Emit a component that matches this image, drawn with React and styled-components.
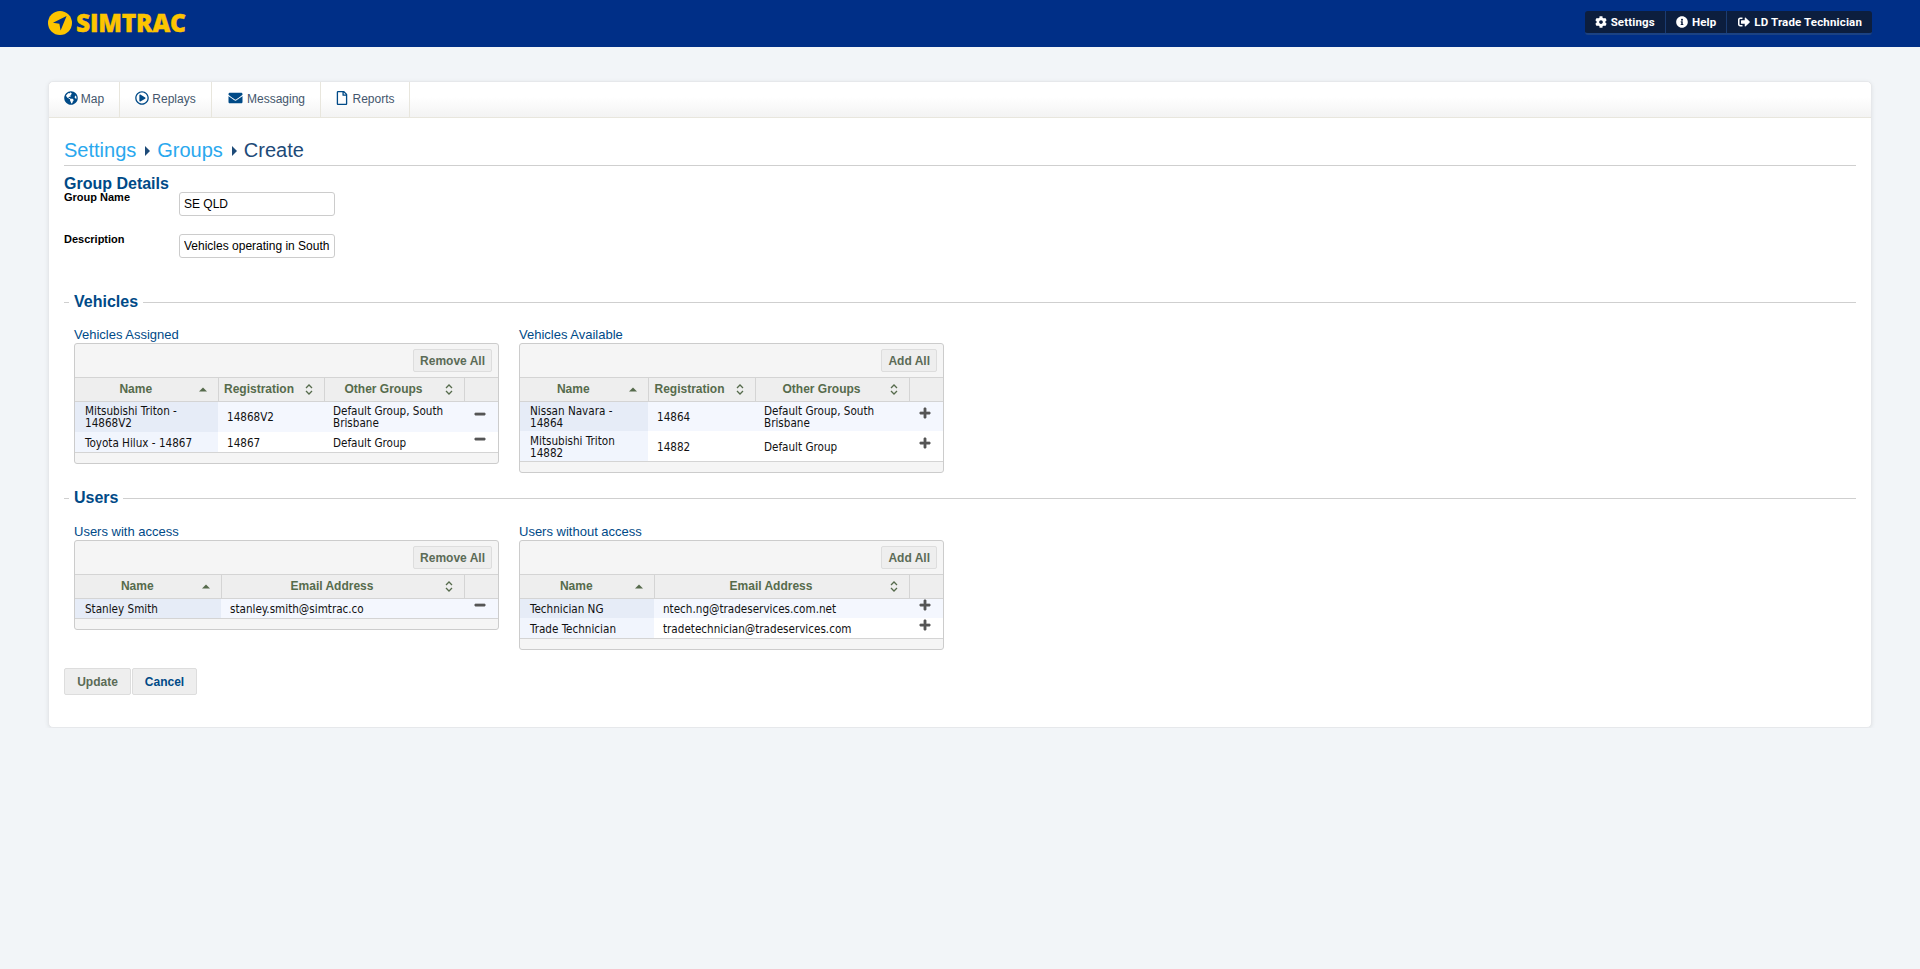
import React from "react";
import styled, { createGlobalStyle } from "styled-components";
import { FaGlobeAmericas, FaRegPlayCircle, FaEnvelope, FaRegFile, FaCog, FaInfoCircle, FaSignOutAlt, FaPlus, FaMinus } from "react-icons/fa";

const Global = createGlobalStyle`
  html, body { margin: 0; padding: 0; background: #f2f5f8; min-height: 100%; }
  body { font-family: "Liberation Sans", Arial, sans-serif; font-size: 12px; color: #000; }
  * { box-sizing: border-box; }
`;

const Header = styled.header`
  height: 47px;
  background: #002f87;
  padding: 0 48px;
  display: flex;
  align-items: center;
  justify-content: space-between;
`;
const Logo = styled.div`
  display: flex;
  align-items: center;
  gap: 4px;
  margin-top: -1px;
`;
const LogoText = styled.span`
  font-family: "Open Sans", sans-serif;
  font-weight: 800;
  font-size: 24.5px;
  letter-spacing: -0.2px;
  line-height: 24px;
  color: #fdc400;
  -webkit-text-stroke: 0.4px #fdc400;
`;
const UserNav = styled.nav`
  display: flex;
  height: 24px;
  margin-top: -1px;
  background: #0c1e3e;
  border-bottom: 2px solid #1b4283;
  border-radius: 3px;
`;
const NavItem = styled.a`
  display: flex;
  align-items: center;
  gap: 4px;
  padding: 0 ${p => p.$pr}px 0 ${p => p.$pl}px;
  color: #fff;
  font: bold 11.5px "Roboto", "Liberation Sans", sans-serif;
  letter-spacing: 0.15px;
  & + & { border-left: 1px solid #1b3c72; }
  svg { width: 12px; height: 12px; }
`;

const Main = styled.main`
  padding: 34px 48px 0 48px;
`;
const Card = styled.div`
  height: 647px;
  background: #fff;
  border: 1px solid #e6e8eb;
  border-radius: 5px;
  box-shadow: 0 1px 4px rgba(0, 0, 0, 0.08);
`;
const TabBar = styled.div`
  display: flex;
  height: 36px;
  border-bottom: 1px solid #e8e6dd;
  background: linear-gradient(#fff 0, #fff 15px, #f3f3f3 100%);
  border-radius: 5px 5px 0 0;
`;
const Tab = styled.a`
  width: ${p => p.$w}px;
  display: flex;
  align-items: center;
  justify-content: center;
  gap: 3px;
  padding-bottom: 2px;
  border-right: 1px solid #e8e6dd;
  color: #44566c;
  font-size: 12px;
  svg { width: ${p => p.$icon || 14}px; height: 14px; color: #004a87; margin-top: -2px; }
`;
const Body = styled.div`
  padding: 20px 15px 0 15px;
`;
const Crumbs = styled.div`
  display: flex;
  align-items: center;
  height: 28px;
  border-bottom: 1px solid #cfcfcf;
  font-size: 20px;
  line-height: 24px;
  padding-bottom: 3px;
`;
const CrumbLink = styled.a`
  color: #2aa8ee;
`;
const CrumbCurrent = styled.span`
  color: #1d4a78;
`;
const CrumbArrow = styled.span`
  width: 0;
  height: 0;
  margin: 2px 7px 0 9px;
  border-left: 5px solid #1d4a78;
  border-top: 5px solid transparent;
  border-bottom: 5px solid transparent;
`;
const DetailsTitle = styled.h3`
  margin: 10px 0 0 0;
  font-size: 16px;
  line-height: 16px;
  font-weight: bold;
  color: #004a87;
`;
const FormRow = styled.div`
  display: flex;
  align-items: flex-start;
  height: ${p => p.$h}px;
`;
const FormLabel = styled.label`
  width: 115px;
  font-size: 11px;
  line-height: 11px;
  font-weight: bold;
`;
const TextInput = styled.input`
  width: 156px;
  height: 24px;
  padding: 0 4px;
  border: 1px solid #ccc;
  border-radius: 3px;
  font: 12px "Liberation Sans", sans-serif;
  color: #000;
  background: #fff;
`;
const Section = styled.fieldset`
  margin: ${p => p.$mt}px 0 0 0;
  padding: 0 0 0 10px;
  border: 0;
  border-top: 1px solid #cfcfcf;
`;
const Legend = styled.legend`
  margin-left: -5px;
  padding: 0 5px;
  font-size: 16px;
  line-height: 18px;
  font-weight: bold;
  color: #004a87;
`;
const Panels = styled.div`
  display: flex;
  align-items: flex-start;
  gap: 20px;
  margin-top: ${p => p.$mt}px;
`;
const Panel = styled.div`
  width: 425px;
`;
const PanelTitle = styled.div`
  font-size: 13px;
  line-height: 15px;
  margin-bottom: 1px;
  color: #004a87;
`;
const GridBox = styled.div`
  border: 1px solid #ccc;
  border-radius: 3px;
  background: #f5f5f5;
`;
const Toolbar = styled.div`
  height: 34px;
  padding: 5px 6px 0 0;
  display: flex;
  justify-content: flex-end;
  border-bottom: 1px solid #d4d4d4;
`;
const SmallButton = styled.button`
  height: 23px;
  padding: 0 6px;
  border: 1px solid #ddd;
  border-radius: 2px;
  background: #eee;
  color: #5b6b56;
  font: bold 12px "Liberation Sans", sans-serif;
`;
const Grid = styled.table`
  width: 423px;
  table-layout: fixed;
  border-collapse: collapse;
  background: #fff;
  font-family: "DejaVu Sans", sans-serif;
  font-stretch: condensed;
`;
const Column = styled.col`
  width: ${p => p.$w}px;
`;
const HeadCell = styled.th`
  position: relative;
  height: 23px;
  padding: 0 ${p => p.$pr || 21}px 0 0;
  background: #eee;
  border-right: 1px solid #d4d4d4;
  border-bottom: 1px solid #d4d4d4;
  color: #566b4c;
  font: bold 12px "Liberation Sans", sans-serif;
  text-align: center;
  &:last-child { border-right: 0; padding: 0; }
`;
const SortMark = styled.svg`
  position: absolute;
  right: 11px;
  top: 6px;
  width: 8px;
  height: 11px;
`;
const Cell = styled.td`
  height: ${p => p.$h}px;
  padding: 1px 2px 0 ${p => p.$sorted ? 10 : 9}px;
  font-size: 11.6px;
  line-height: 12px;
  color: #111;
  background: ${p => p.$sorted ? (p.$odd ? "#e6ecf7" : "#f1f5fd") : (p.$odd ? "#f4f7fe" : "#fff")};
`;
const ActionCell = styled(Cell)`
  padding: 0 2px 6px 0;
  text-align: center;
  color: #555;
  svg { width: 12px; height: 12px; display: block; margin: 0 auto; stroke: currentColor; stroke-width: 24; }
`;
const GridFoot = styled.div`
  height: 11px;
  border-top: 1px solid #d4d4d4;
`;
const Actions = styled.div`
  display: flex;
  gap: 1px;
  margin-top: 18px;
`;
const ActionButton = styled.button`
  height: 27px;
  width: ${p => p.$w}px;
  border: 1px solid #ddd;
  border-radius: 2px;
  background: #eee;
  color: ${p => p.$blue ? "#004a87" : "#5b6b56"};
  font: bold 12px "Liberation Sans", sans-serif;
`;

function LocationLogo() {
  return (
    <svg width="24" height="24" viewBox="0 0 24 24">
      <circle cx="12" cy="12" r="12" fill="#fdc400" />
      <path d="M18.6 5 L5 11.8 L11.4 12.8 L12.6 19.6 Z" fill="#002f87" />
    </svg>
  );
}

function SortIcon({ active }) {
  return (
    <SortMark viewBox="0 0 8 11">
      {active ? (
        <path d="M0 7.5 L4 3.5 L8 7.5 Z" fill="#566b4c" />
      ) : (
        <path d="M1 4 L4 1 L7 4 M1 7 L4 10 L7 7" fill="none" stroke="#566b4c" strokeWidth="1.3" />
      )}
    </SortMark>
  );
}

function DataGrid({ title, buttonLabel, columns, rows, icon: Icon, rowHeights }) {
  return (
    <Panel>
      <PanelTitle>{title}</PanelTitle>
      <GridBox>
        <Toolbar><SmallButton>{buttonLabel}</SmallButton></Toolbar>
        <Grid>
          <colgroup>
            {columns.map(c => <Column key={c.name} $w={c.width} />)}
            <Column $w={34} />
          </colgroup>
          <thead>
            <tr>
              {columns.map((c, i) => (
                <HeadCell key={c.name} $pr={c.pad}>{c.name}<SortIcon active={i === 0} /></HeadCell>
              ))}
              <HeadCell />
            </tr>
          </thead>
          <tbody>
            {rows.map((r, ri) => (
              <tr key={ri}>
                {r.map((v, ci) => (
                  <Cell key={ci} $h={rowHeights[ri]} $sorted={ci === 0} $odd={ri % 2 === 0}>{v}</Cell>
                ))}
                <ActionCell $h={rowHeights[ri]} $odd={ri % 2 === 0}><Icon /></ActionCell>
              </tr>
            ))}
          </tbody>
        </Grid>
        <GridFoot />
      </GridBox>
    </Panel>
  );
}

export default function App() {
  return (
    <>
      <Global />
      <Header>
        <Logo>
          <LocationLogo />
          <LogoText>SIMTRAC</LogoText>
        </Logo>
        <UserNav>
          <NavItem $pl={10} $pr={10}><FaCog />Settings</NavItem>
          <NavItem $pl={10} $pr={10}><FaInfoCircle />Help</NavItem>
          <NavItem $pl={11} $pr={10}><FaSignOutAlt />LD Trade Technician</NavItem>
        </UserNav>
      </Header>
      <Main>
        <Card>
          <TabBar>
            <Tab $w={71}><FaGlobeAmericas />Map</Tab>
            <Tab $w={92}><FaRegPlayCircle />Replays</Tab>
            <Tab $w={109} $icon={17}><FaEnvelope />Messaging</Tab>
            <Tab $w={89}><FaRegFile />Reports</Tab>
          </TabBar>
          <Body>
            <Crumbs>
              <CrumbLink>Settings</CrumbLink>
              <CrumbArrow />
              <CrumbLink>Groups</CrumbLink>
              <CrumbArrow />
              <CrumbCurrent>Create</CrumbCurrent>
            </Crumbs>
            <DetailsTitle>Group Details</DetailsTitle>
            <FormRow $h={42}>
              <FormLabel>Group Name</FormLabel>
              <TextInput readOnly value="SE QLD" />
            </FormRow>
            <FormRow $h={50}>
              <FormLabel>Description</FormLabel>
              <TextInput readOnly value="Vehicles operating in South East Queensland" />
            </FormRow>
            <Section $mt={9}>
              <Legend>Vehicles</Legend>
              <Panels $mt={16}>
                <DataGrid
                  title="Vehicles Assigned"
                  buttonLabel="Remove All"
                  icon={FaMinus}
                  rowHeights={[31, 20]}
                  columns={[{ name: "Name", width: 143 }, { name: "Registration", width: 106, pad: 24 }, { name: "Other Groups", width: 140 }]}
                  rows={[["Mitsubishi Triton - 14868V2", "14868V2", "Default Group, South Brisbane"], ["Toyota Hilux - 14867", "14867", "Default Group"]]}
                />
                <DataGrid
                  title="Vehicles Available"
                  buttonLabel="Add All"
                  icon={FaPlus}
                  rowHeights={[30, 30]}
                  columns={[{ name: "Name", width: 128 }, { name: "Registration", width: 107, pad: 24 }, { name: "Other Groups", width: 154 }]}
                  rows={[["Nissan Navara - 14864", "14864", "Default Group, South Brisbane"], ["Mitsubishi Triton 14882", "14882", "Default Group"]]}
                />
              </Panels>
            </Section>
            <Section $mt={16}>
              <Legend>Users</Legend>
              <Panels $mt={17}>
                <DataGrid
                  title="Users with access"
                  buttonLabel="Remove All"
                  icon={FaMinus}
                  rowHeights={[20]}
                  columns={[{ name: "Name", width: 146 }, { name: "Email Address", width: 243 }]}
                  rows={[["Stanley Smith", "stanley.smith@simtrac.co"]]}
                />
                <DataGrid
                  title="Users without access"
                  buttonLabel="Add All"
                  icon={FaPlus}
                  rowHeights={[20, 20]}
                  columns={[{ name: "Name", width: 134 }, { name: "Email Address", width: 255 }]}
                  rows={[["Technician NG", "ntech.ng@tradeservices.com.net"], ["Trade Technician", "tradetechnician@tradeservices.com"]]}
                />
              </Panels>
            </Section>
            <Actions>
              <ActionButton $w={67}>Update</ActionButton>
              <ActionButton $w={65} $blue>Cancel</ActionButton>
            </Actions>
          </Body>
        </Card>
      </Main>
    </>
  );
}
